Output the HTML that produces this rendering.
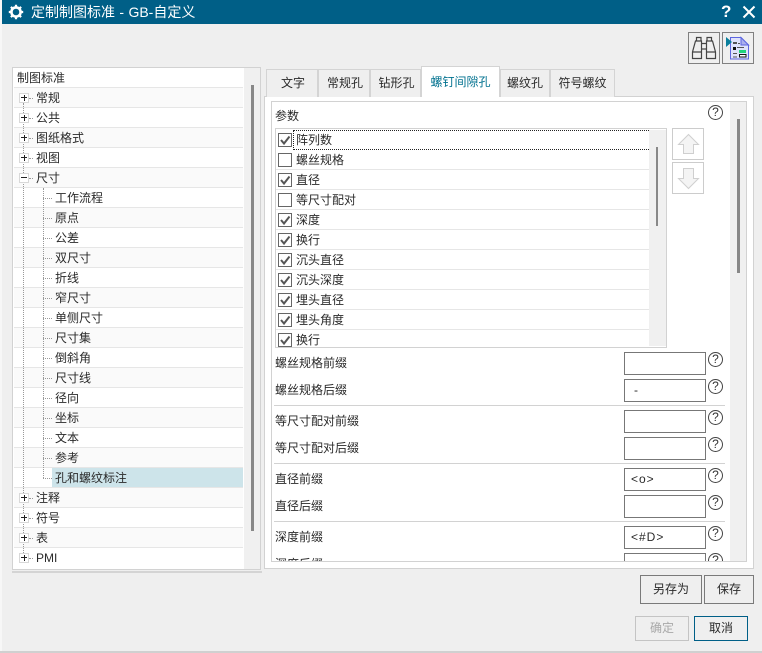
<!DOCTYPE html>
<html lang="zh"><head><meta charset="utf-8"><title>定制制图标准 - GB-自定义</title>
<style>
html,body{margin:0;padding:0}
body{width:762px;height:653px;position:relative;overflow:hidden;background:#efefef;font:12px/20px "Liberation Sans","Noto Sans CJK SC",sans-serif;color:#2a2a2a}
div,svg,span{position:absolute;box-sizing:border-box}
.t{white-space:nowrap;height:20px}
.row{left:14px;width:229px;height:20px;border-bottom:1px solid #e6e6e6;background:#fff}
.alt{background:#fafafa}
.lrow{left:276px;width:373px;height:20px;border-bottom:1px solid #e6e6e6;background:#fff}
.pm{left:19px;width:10px;height:10px;border:1px solid #d8d8d8;background:#fff}
.pm:before{content:"";position:absolute;left:1px;top:3px;width:6px;height:1px;background:#222}
.pl:after{content:"";position:absolute;left:3.5px;top:1px;width:1px;height:6px;background:#222}
.dv{width:1px;border-left:1px dotted #999}
.dh{height:1px;border-top:1px dotted #999}
.tab{top:69px;height:28px;background:#efefef;border:1px solid #d4d4d4;border-bottom:0;text-align:center;line-height:26px;color:#2a2a2a}
.cb{left:278px;width:14px;height:14px;border:1px solid #666;background:#fff}
.cb svg{left:0;top:0}
.inp{left:624px;width:82px;height:23px;border:1px solid #777;background:#fff;padding-left:6px;line-height:21px;font-size:12px;letter-spacing:1px;overflow:hidden}
.q{left:708px;width:15px;height:15px;border:1px solid #444;border-radius:50%;text-align:center;font-size:12px;line-height:13px;color:#333;background:#fff}
.sep{left:274px;width:451px;height:1px;background:#d2d2d2}
.btn{border:1px solid #7a7a7a;background:#efefef;text-align:center;color:#2a2a2a}
</style></head><body>
<div style="left:0;top:0;width:2px;height:653px;background:#f7f7f7"></div>
<div style="left:2px;top:0;width:760px;height:24px;background:#005f87"></div>
<svg style="left:8px;top:4px" width="16" height="16" viewBox="0 0 16 16"><circle cx="8" cy="8" r="4.6" fill="none" stroke="#fff" stroke-width="2.6"/><path d="M8 .8v3M8 12.2v3M.8 8h3M12.2 8h3M2.9 2.9l2.1 2.1M11 11l2.1 2.1M13.1 2.9L11 5M5 11l-2.1 2.1" stroke="#fff" stroke-width="2.2"/></svg>
<div class="t" style="left:31px;top:2px;color:#fff;font-size:14px;word-spacing:.5px">定制制图标准 - GB-自定义</div>
<div class="t" style="left:721px;top:2px;color:#fff;font-size:17px;font-weight:bold">?</div>
<svg style="left:742px;top:5px" width="14" height="14"><path d="M1.5 1.5L12.5 12.5M12.5 1.5L1.5 12.5" stroke="#fff" stroke-width="2"/></svg>

<div class="btn" style="left:688px;top:32px;width:32px;height:32px;border-color:#808080"></div>
<svg style="left:689px;top:33px" width="30" height="30" viewBox="0 0 30 30" fill="none" stroke="#444" stroke-width="1.2"><path d="M7.5 8V4.5H12V8M6.5 8H12.5V25.5H3.5V19ZM3.5 19H12.5M12.5 10.5H17.5M12.5 16H17.5M18 8V4.5H22.5V8M17.5 8H23.5L26.5 19V25.5H17.5ZM17.5 19H26.5"/></svg>
<div class="btn" style="left:722px;top:32px;width:32px;height:32px;border-color:#808080"></div>
<svg style="left:723px;top:33px" width="30" height="30" viewBox="0 0 30 30"><path d="M7.5 4.5H18L25.5 12V26H7.5Z" fill="#dfe3fb" stroke="#5d66e0" stroke-width="1"/><path d="M18 4.5V12H25.5Z" fill="#aab0ee" stroke="#5d66e0"/><path d="M3 4L9 9L3 14Z" fill="#0a7f9c"/><rect x="10" y="9" width="4" height="2" fill="#555"/><rect x="10" y="14" width="3" height="3" fill="#111"/><path d="M14 14.5H21M10 20.5H14M10 24H14M15 10.5H17" stroke="#555"/><rect x="16" y="17" width="7" height="3" fill="#1fd47a"/><rect x="16.5" y="21.5" width="6.5" height="2.5" fill="#fff" stroke="#111"/></svg>

<!-- tree -->
<div style="left:12px;top:67px;width:249px;height:503px;background:#fff;border:1px solid #d2d2d2"></div>
<div style="left:244px;top:68px;width:16px;height:501px;background:#f0f0f0"></div>
<div style="left:251px;top:85px;width:3px;height:446px;background:#888"></div>
<div style="left:12px;top:571px;width:250px;height:2px;background:#d4d4d4"></div>

<div class="row" style="top:68px"></div>
<div class="row alt" style="top:88px"></div><div class="row" style="top:108px"></div>
<div class="row alt" style="top:128px"></div><div class="row" style="top:148px"></div>
<div class="row alt" style="top:168px"></div><div class="row" style="top:188px"></div>
<div class="row alt" style="top:208px"></div><div class="row" style="top:228px"></div>
<div class="row alt" style="top:248px"></div><div class="row" style="top:268px"></div>
<div class="row alt" style="top:288px"></div><div class="row" style="top:308px"></div>
<div class="row alt" style="top:328px"></div><div class="row" style="top:348px"></div>
<div class="row alt" style="top:368px"></div><div class="row" style="top:388px"></div>
<div class="row alt" style="top:408px"></div><div class="row" style="top:428px"></div>
<div class="row alt" style="top:448px"></div><div class="row" style="top:468px"></div>
<div class="row alt" style="top:488px"></div><div class="row" style="top:508px"></div>
<div class="row alt" style="top:528px"></div><div class="row" style="top:548px;border:0"></div>
<div style="left:52px;top:468px;width:191px;height:19px;background:#cde4ea"></div>

<div class="dv" style="left:23px;top:103px;height:450px"></div>
<div class="dv" style="left:43px;top:188px;height:290px"></div>
<div class="dh" style="left:29px;top:98px;width:4px"></div>
<div class="dh" style="left:29px;top:118px;width:4px"></div>
<div class="dh" style="left:29px;top:138px;width:4px"></div>
<div class="dh" style="left:29px;top:158px;width:4px"></div>
<div class="dh" style="left:29px;top:178px;width:4px"></div>
<div class="dh" style="left:29px;top:498px;width:4px"></div>
<div class="dh" style="left:29px;top:518px;width:4px"></div>
<div class="dh" style="left:29px;top:538px;width:4px"></div>
<div class="dh" style="left:29px;top:558px;width:4px"></div>
<div class="dh" style="left:43px;top:198px;width:9px"></div>
<div class="dh" style="left:43px;top:218px;width:9px"></div>
<div class="dh" style="left:43px;top:238px;width:9px"></div>
<div class="dh" style="left:43px;top:258px;width:9px"></div>
<div class="dh" style="left:43px;top:278px;width:9px"></div>
<div class="dh" style="left:43px;top:298px;width:9px"></div>
<div class="dh" style="left:43px;top:318px;width:9px"></div>
<div class="dh" style="left:43px;top:338px;width:9px"></div>
<div class="dh" style="left:43px;top:358px;width:9px"></div>
<div class="dh" style="left:43px;top:378px;width:9px"></div>
<div class="dh" style="left:43px;top:398px;width:9px"></div>
<div class="dh" style="left:43px;top:418px;width:9px"></div>
<div class="dh" style="left:43px;top:438px;width:9px"></div>
<div class="dh" style="left:43px;top:458px;width:9px"></div>
<div class="dh" style="left:43px;top:478px;width:9px"></div>

<div class="pm pl" style="top:93px"></div><div class="pm pl" style="top:113px"></div><div class="pm pl" style="top:133px"></div><div class="pm pl" style="top:153px"></div><div class="pm" style="top:173px"></div><div class="pm pl" style="top:493px"></div><div class="pm pl" style="top:513px"></div><div class="pm pl" style="top:533px"></div><div class="pm pl" style="top:553px"></div>

<div class="t" style="left:17px;top:68px">制图标准</div>
<div class="t" style="left:36px;top:88px">常规</div>
<div class="t" style="left:36px;top:108px">公共</div>
<div class="t" style="left:36px;top:128px">图纸格式</div>
<div class="t" style="left:36px;top:148px">视图</div>
<div class="t" style="left:36px;top:168px">尺寸</div>
<div class="t" style="left:55px;top:188px">工作流程</div>
<div class="t" style="left:55px;top:208px">原点</div>
<div class="t" style="left:55px;top:228px">公差</div>
<div class="t" style="left:55px;top:248px">双尺寸</div>
<div class="t" style="left:55px;top:268px">折线</div>
<div class="t" style="left:55px;top:288px">窄尺寸</div>
<div class="t" style="left:55px;top:308px">单侧尺寸</div>
<div class="t" style="left:55px;top:328px">尺寸集</div>
<div class="t" style="left:55px;top:348px">倒斜角</div>
<div class="t" style="left:55px;top:368px">尺寸线</div>
<div class="t" style="left:55px;top:388px">径向</div>
<div class="t" style="left:55px;top:408px">坐标</div>
<div class="t" style="left:55px;top:428px">文本</div>
<div class="t" style="left:55px;top:448px">参考</div>
<div class="t" style="left:55px;top:468px">孔和螺纹标注</div>
<div class="t" style="left:36px;top:488px">注释</div>
<div class="t" style="left:36px;top:508px">符号</div>
<div class="t" style="left:36px;top:528px">表</div>
<div class="t" style="left:36px;top:548px">PMI</div>

<!-- tabs -->
<div style="left:264px;top:96px;width:490px;height:473px;background:#fff;border:1px solid #d2d2d2"></div>
<div class="tab" style="left:266px;width:52px;padding-left:2px">文字</div>
<div class="tab" style="left:318px;width:52px;padding-left:2px">常规孔</div>
<div class="tab" style="left:370px;width:51px;padding-left:2px">钻形孔</div>
<div class="tab" style="left:500px;width:50px">螺纹孔</div>
<div class="tab" style="left:550px;width:65px">符号螺纹</div>
<div class="tab" style="left:421px;width:79px;top:66px;height:31px;background:#fff;color:#00718f;line-height:30px">螺钉间隙孔</div>

<div style="left:271px;top:101px;width:476px;height:461px;background:#fff;border:1px solid #d2d2d2;overflow:hidden"></div>
<div style="left:730px;top:102px;width:16px;height:459px;background:#f0f0f0"></div>
<div style="left:737px;top:119px;width:3px;height:154px;background:#888"></div>

<div class="t" style="left:275px;top:106px">参数</div>
<div class="q" style="top:105px">?</div>

<!-- list -->
<div style="left:275px;top:128px;width:392px;height:220px;background:#fff;border:1px solid #d2d2d2"></div>
<div style="left:649px;top:130px;width:17px;height:216px;background:#f0f0f0"></div>
<div style="left:656px;top:147px;width:2px;height:79px;background:#888"></div>
<div class="lrow alt" style="top:130px;border:0"></div>
<div class="lrow alt" style="top:150px"></div><div class="lrow" style="top:170px"></div>
<div class="lrow alt" style="top:190px"></div><div class="lrow" style="top:210px"></div>
<div class="lrow alt" style="top:230px"></div><div class="lrow" style="top:250px"></div>
<div class="lrow alt" style="top:270px"></div><div class="lrow" style="top:290px"></div>
<div class="lrow alt" style="top:310px"></div><div class="lrow" style="top:330px;border:0;height:16px"></div>
<div style="left:293px;top:130px;width:356px;height:20px;border:1px dotted #222;border-right:0;background:#fff"></div>

<svg width="0" height="0" style="left:0;top:0"><symbol id="ck" viewBox="0 0 12 12"><path d="M2 6L5 9.5L10.5 2.5" fill="none" stroke="#555" stroke-width="2"/></symbol></svg>
<div class="cb" style="top:133px"><svg width="12" height="12"><use href="#ck"/></svg></div>
<div class="cb" style="top:153px"></div>
<div class="cb" style="top:173px"><svg width="12" height="12"><use href="#ck"/></svg></div>
<div class="cb" style="top:193px"></div>
<div class="cb" style="top:213px"><svg width="12" height="12"><use href="#ck"/></svg></div>
<div class="cb" style="top:233px"><svg width="12" height="12"><use href="#ck"/></svg></div>
<div class="cb" style="top:253px"><svg width="12" height="12"><use href="#ck"/></svg></div>
<div class="cb" style="top:273px"><svg width="12" height="12"><use href="#ck"/></svg></div>
<div class="cb" style="top:293px"><svg width="12" height="12"><use href="#ck"/></svg></div>
<div class="cb" style="top:313px"><svg width="12" height="12"><use href="#ck"/></svg></div>
<div class="cb" style="top:333px"><svg width="12" height="12"><use href="#ck"/></svg></div>

<div class="t" style="left:296px;top:130px">阵列数</div>
<div class="t" style="left:296px;top:150px">螺丝规格</div>
<div class="t" style="left:296px;top:170px">直径</div>
<div class="t" style="left:296px;top:190px">等尺寸配对</div>
<div class="t" style="left:296px;top:210px">深度</div>
<div class="t" style="left:296px;top:230px">换行</div>
<div class="t" style="left:296px;top:250px">沉头直径</div>
<div class="t" style="left:296px;top:270px">沉头深度</div>
<div class="t" style="left:296px;top:290px">埋头直径</div>
<div class="t" style="left:296px;top:310px">埋头角度</div>
<div class="t" style="left:296px;top:330px">换行</div>

<div style="left:672px;top:128px;width:32px;height:32px;border:1px solid #ccc"></div>
<svg style="left:672px;top:128px" width="32" height="32" fill="#f4f4f4" stroke="#cfcfcf"><path d="M16.5 6.5L26.5 16.5H21.5V25.5H11.5V16.5H6.5Z"/></svg>
<div style="left:672px;top:162px;width:32px;height:32px;border:1px solid #ccc"></div>
<svg style="left:672px;top:162px" width="32" height="32" fill="#f4f4f4" stroke="#cfcfcf"><path d="M11.5 6.5H21.5V16.5H26.5L16.5 26.5L6.5 16.5H11.5Z"/></svg>

<!-- fields -->
<div class="t" style="left:275px;top:353px">螺丝规格前缀</div>
<div class="t" style="left:275px;top:380px">螺丝规格后缀</div>
<div class="sep" style="top:405px"></div>
<div class="t" style="left:275px;top:411px">等尺寸配对前缀</div>
<div class="t" style="left:275px;top:438px">等尺寸配对后缀</div>
<div class="sep" style="top:463px"></div>
<div class="t" style="left:275px;top:469px">直径前缀</div>
<div class="t" style="left:275px;top:496px">直径后缀</div>
<div class="sep" style="top:521px"></div>
<div class="t" style="left:275px;top:527px">深度前缀</div>

<div class="inp" style="top:352px"></div><div class="q" style="top:352px">?</div>
<div class="inp" style="top:379px;padding-left:9px">-</div><div class="q" style="top:379px">?</div>
<div class="inp" style="top:410px"></div><div class="q" style="top:410px">?</div>
<div class="inp" style="top:437px"></div><div class="q" style="top:437px">?</div>
<div class="inp" style="top:468px">&lt;o&gt;</div><div class="q" style="top:468px">?</div>
<div class="inp" style="top:495px"></div><div class="q" style="top:495px">?</div>
<div class="inp" style="top:526px">&lt;#D&gt;</div><div class="q" style="top:526px">?</div>

<div style="left:272px;top:553px;width:458px;height:8px;overflow:hidden;background:#fff">
  <div class="t" style="left:3px;top:1px">深度后缀</div>
  <div class="inp" style="left:352px;top:0">&nbsp;</div>
  <div class="q" style="left:436px;top:0">?</div>
</div>

<!-- buttons -->
<div class="btn" style="left:640px;top:575px;width:62px;height:29px;line-height:27px">另存为</div>
<div class="btn" style="left:704px;top:575px;width:50px;height:29px;line-height:27px">保存</div>
<div class="btn" style="left:635px;top:616px;width:54px;height:25px;line-height:23px;border-color:#c4c4c4;color:#a8a8a8">确定</div>
<div class="btn" style="left:694px;top:616px;width:54px;height:25px;line-height:23px;border-color:#005f87">取消</div>
<div style="left:0;top:651px;width:762px;height:2px;background:#d0d0d0"></div>
</body></html>
